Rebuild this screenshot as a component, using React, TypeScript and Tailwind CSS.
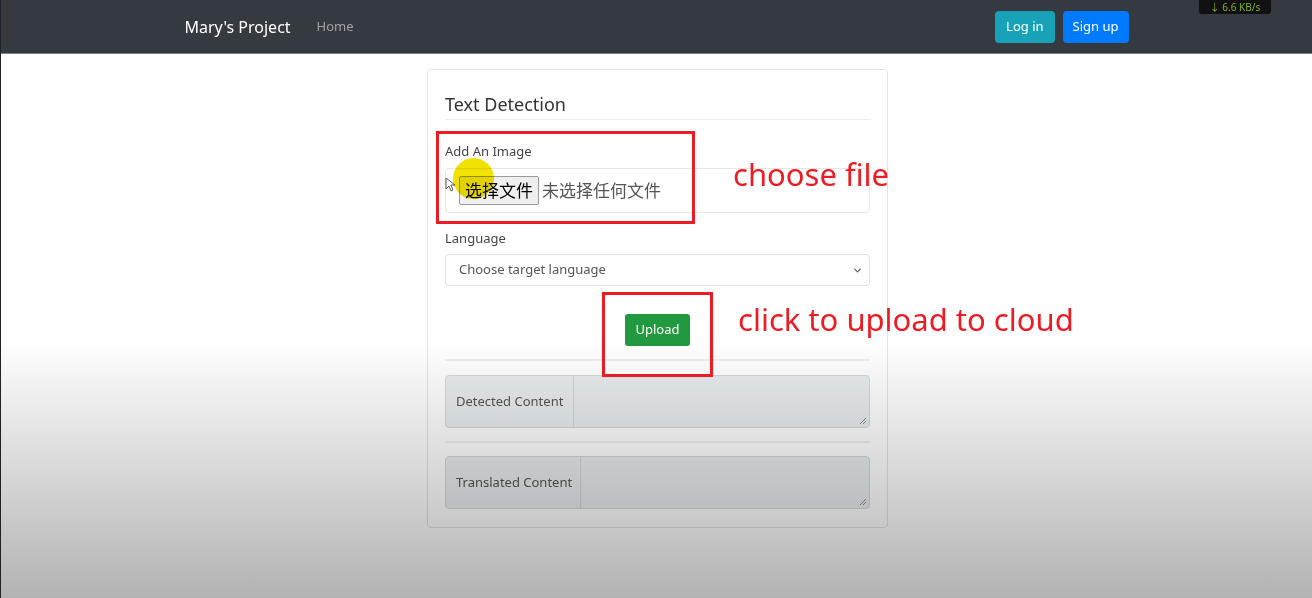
import { ChevronDown } from 'lucide-react'

const sans = "font-['Noto_Sans','Noto_Sans_CJK_SC',sans-serif]"

function Divider() {
  return <div className="h-[2px] bg-[#efefef]" />
}

function ContentGroup({ label, labelWidth }: { label: string; labelWidth: string }) {
  return (
    <div className="flex h-[53px] overflow-hidden rounded-[4px] border border-[#d4d7db] bg-[#e9ecef]">
      <div className={`${labelWidth} flex items-center whitespace-nowrap border-r border-[#d0d3d8] px-[10px] text-[13px] text-[#555]`}>
        {label}
      </div>
      <div className="relative flex-1">
        <svg className="absolute bottom-[2px] right-[2px]" width="8" height="8" viewBox="0 0 8 8">
          <path d="M7 1 1 7M7 4 4 7" stroke="#888" strokeWidth="1" />
        </svg>
      </div>
    </div>
  )
}

export default function App() {
  return (
    <div className={`${sans} relative h-[598px] overflow-hidden border-l border-[#222] bg-white`}>
      <nav className="h-[54px] border-b border-[#7d8189] bg-[#343a40]">
        <div className="mx-auto flex h-full w-[976px] items-center px-4">
          <span className="text-[16px] text-white">Mary's Project</span>
          <span className="ml-[26px] text-[13px] text-[#a0a3a7]">Home</span>
          <div className="ml-auto flex gap-2">
            <button className="h-[32px] rounded-[4px] bg-[#17a2b8] px-[11px] text-[13px] text-white">Log in</button>
            <button className="h-[32px] rounded-[4px] bg-[#007bff] px-[10px] text-[13px] text-white">Sign up</button>
          </div>
        </div>
      </nav>

      <main className="pt-[15px]">
        <section className="ml-[426px] w-[461px] rounded-[4px] border border-[#e3e3e3] px-[17px] pb-[18px] pt-[21px]">
          <h2 className="border-b border-[#ececec] pb-[2px] text-[18px] leading-[26px] text-[#333]">Text Detection</h2>

          <label className="mt-[22px] block text-[13px] leading-[18px] text-[#444]">Add An Image</label>
          <div className="mt-[8px] flex h-[45px] items-center rounded-[4px] border border-[#e6e6e6] px-[13px]">
            <span className="flex h-[29px] items-center rounded-[2px] border border-[#9a9a9a] bg-[#efefef] px-[5px] text-[17px] text-black">选择文件</span>
            <span className="ml-[3px] text-[17px] text-[#555]">未选择任何文件</span>
          </div>

          <label className="mt-[16px] block text-[13px] leading-[18px] text-[#444]">Language</label>
          <div className="mt-[7px] flex h-[32px] items-center rounded-[4px] border border-[#e0e0e0] pl-[13px] pr-[6px] text-[13px] text-[#555]">
            Choose target language
            <ChevronDown size={11} strokeWidth={3} className="ml-auto text-[#666]" />
          </div>

          <div className="mt-[28px] flex justify-center">
            <button className="h-[32px] w-[65px] rounded-[3px] bg-[#22993f] text-[13px] text-white">Upload</button>
          </div>

          <div className="mt-[13px]"><Divider /></div>
          <div className="mt-[14px]"><ContentGroup label="Detected Content" labelWidth="w-[128px]" /></div>
          <div className="mt-[13px]"><Divider /></div>
          <div className="mt-[13px]"><ContentGroup label="Translated Content" labelWidth="w-[135px]" /></div>
        </section>
      </main>

      {/* video shading */}
      <div className="pointer-events-none absolute inset-0 bg-[linear-gradient(to_bottom,transparent_340px,rgba(0,0,0,0.3)_598px)]" />

      {/* annotations */}
      <div className="pointer-events-none absolute left-[435px] top-[131px] h-[93px] w-[259px] border-[3px] border-[#ec1c24]" />
      <div className="pointer-events-none absolute left-[601px] top-[292px] h-[85px] w-[111px] border-[3px] border-[#ec1c24]" />
      <span className="absolute left-[732px] top-[151px] text-[31px] text-[#ec1c24]">choose file</span>
      <span className="absolute left-[737px] top-[296px] text-[31px] text-[#ec1c24]">click to upload to cloud</span>

      {/* cursor highlight */}
      <div className="pointer-events-none absolute left-[452px] top-[158px] h-[41px] w-[41px] rounded-full bg-[#f2e200] mix-blend-multiply" />
      <svg className="pointer-events-none absolute left-[444px] top-[177px]" width="10" height="15" viewBox="0 0 10 15">
        <path d="M1 1v11l3-3 2 5 2-1-2-5h4z" fill="#fff" stroke="#333" strokeWidth="0.8" />
      </svg>

      {/* network speed overlay */}
      <div className="absolute left-[1198px] top-0 flex h-[14px] w-[72px] items-center justify-center rounded-b-[3px] bg-[#111] text-[10px] leading-none text-[#7fae38]">
        ↓ 6.6 KB/s
      </div>
    </div>
  )
}
